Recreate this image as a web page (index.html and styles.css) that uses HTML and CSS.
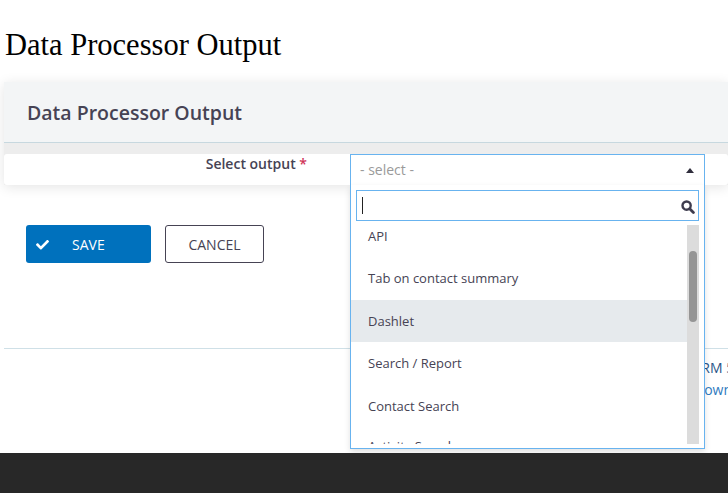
FILE: index.html
```html
<!DOCTYPE html>
<html lang="en">
<head>
<meta charset="utf-8">
<title>Data Processor Output</title>
<link rel="stylesheet" href="styles.css">
</head>
<body>
<div class="page">
  <h1 class="page-title">Data Processor Output</h1>

  <section class="panel">
    <div class="panel-header">
      <h2 class="panel-title">Data Processor Output</h2>
    </div>
    <div class="panel-body">
      <div class="form-row">
        <label class="form-label">Select output <span class="req">*</span></label>
        <div class="select">
          <div class="select-current">
            <span class="placeholder">- select -</span>
            <span class="caret"></span>
          </div>
          <div class="select-drop">
            <div class="search-wrap">
              <div class="search-input">
                <span class="text-cursor"></span>
                <svg class="search-icon" viewBox="0 0 14 14" width="14" height="14" aria-hidden="true">
                  <circle cx="5.6" cy="5.6" r="4.1" fill="none" stroke="#3e3c4e" stroke-width="2.4"/>
                  <path d="M8.7 8.7 L12.4 12.4" stroke="#3e3c4e" stroke-width="2.8" stroke-linecap="round"/>
                </svg>
              </div>
            </div>
            <div class="results">
              <ul class="result-list">
                <li class="result">API</li>
                <li class="result">Tab on contact summary</li>
                <li class="result highlighted">Dashlet</li>
                <li class="result">Search / Report</li>
                <li class="result">Contact Search</li>
                <li class="result">Activity Search</li>
              </ul>
              <div class="scroll-track"><div class="scroll-thumb"></div></div>
            </div>
          </div>
        </div>
      </div>
    </div>
  </section>

  <div class="buttons">
    <button class="btn btn-primary" type="button">
      <svg class="btn-icon" viewBox="0 0 512 430" width="13" height="11" aria-hidden="true">
        <path fill="#fff" d="M173.9 407.4l-166.4-166.4c-10-10-10-26.2 0-36.2l36.2-36.2c10-10 26.2-10 36.2 0L192 280.7 432.1 40.6c10-10 26.2-10 36.2 0l36.2 36.2c10 10 10 26.2 0 36.2l-294.4 294.4c-10 10-26.2 10-36.2 0z"/>
      </svg>
      <span>SAVE</span>
    </button>
    <button class="btn btn-secondary" type="button">CANCEL</button>
  </div>

  <div class="footer-rule"></div>
  <div class="footer-text">
    <p class="footer-line line-one">Powered by <a href="#">CiviCRM 5.69.1</a>.</p>
    <p class="footer-line line-two"><a href="#">Download CiviCRM</a>.</p>
  </div>
</div>
<footer class="site-footer"></footer>
</body>
</html>
```

FILE: styles.css
```css
html, body {
  margin: 0;
  padding: 0;
  background: #fff;
  overflow: hidden;
}

body {
  font-family: "Open Sans", "Noto Sans", sans-serif;
  color: #464354;
}

.page {
  position: relative;
  height: 453px;
  padding-left: 4px;
  box-sizing: border-box;
  overflow: hidden;
}

.page-title {
  margin: 28px 0 20px 1px;
  font-family: "Liberation Serif", "Times New Roman", serif;
  font-size: 30.5px;
  font-weight: normal;
  line-height: 34px;
  color: #000;
}

/* Panel */
.panel {
  background: #ededed;
  box-shadow: 0 2px 12px rgba(0, 0, 0, 0.11);
}

.panel-header {
  height: 60px;
  background: #f3f5f6;
  border-bottom: 1px solid #c7d8df;
  display: flex;
  align-items: center;
  padding-left: 23px;
}

.panel-title {
  margin: 0;
  font-size: 19.5px;
  font-weight: 600;
  color: #464354;
}

.panel-body {
  padding-top: 11px;
}

.form-row {
  display: grid;
  grid-template-columns: 346px 355px;
  height: 31px;
  background: #fff;
  border-radius: 3px;
}

.form-label {
  text-align: right;
  padding-right: 43px;
  font-size: 14px;
  font-weight: 600;
  line-height: 19px;
  color: #464354;
}

.req {
  color: #cf3458;
}

/* Select */
.select {
  position: relative;
  border: 1px solid #68b3ef;
  border-bottom: none;
  background: #fff;
}

.select-current {
  height: 30px;
  display: flex;
  align-items: center;
  justify-content: space-between;
  padding: 0 10px 0 9px;
}

.placeholder {
  font-size: 14px;
  line-height: 19px;
  color: #9a9a9a;
  padding-bottom: 2px;
}

.caret {
  width: 0;
  height: 0;
  border-left: 4.5px solid transparent;
  border-right: 4.5px solid transparent;
  border-bottom: 5px solid #2f2d3c;
}

.select-drop {
  position: absolute;
  top: 100%;
  left: -1px;
  right: -1px;
  border: 1px solid #68b3ef;
  border-top: none;
  background: #fff;
  padding-bottom: 4px;
  box-shadow: 0 3px 6px rgba(0, 0, 0, 0.12);
  z-index: 5;
}

.search-wrap {
  padding: 5px 5px 4px;
}

.search-input {
  height: 29px;
  border: 1px solid #68b3ef;
  display: flex;
  align-items: center;
  justify-content: space-between;
  padding: 0 3px 0 5px;
}

.text-cursor {
  width: 1px;
  height: 17px;
  background: #222;
}

.search-icon {
  display: block;
  margin-top: 2px;
}

.results {
  display: flex;
  height: 219px;
  margin-right: 5px;
}

.result-list {
  flex: 1;
  list-style: none;
  margin: 0;
  padding: 0;
  overflow: hidden;
}

.result {
  height: 42.5px;
  line-height: 42.5px;
  padding-left: 17px;
  font-size: 13px;
  color: #464354;
}

.result:first-child {
  margin-top: -10.5px;
}

.result:last-child {
  line-height: 38px;
}

.result.highlighted {
  background: #e6eaed;
}

.scroll-track {
  width: 12px;
  background: #dcdcdc;
  padding-top: 26px;
  box-sizing: border-box;
}

.scroll-thumb {
  width: 8px;
  height: 71px;
  margin-left: 2px;
  border-radius: 4px;
  background: #959595;
}

/* Buttons */
.buttons {
  display: flex;
  gap: 14px;
  margin-top: 40px;
  padding-left: 22px;
}

.btn {
  height: 38px;
  border-radius: 3px;
  font-family: "Open Sans", "Noto Sans", sans-serif;
  font-size: 14px;
  cursor: pointer;
  box-sizing: border-box;
}

.btn-primary {
  width: 125px;
  background: #0071bd;
  border: none;
  color: #fff;
  display: flex;
  align-items: center;
  padding: 0 0 0 10px;
  gap: 23px;
}

.btn-icon {
  display: block;
}

.btn-secondary {
  width: 99px;
  background: #fff;
  border: 1px solid #464354;
  color: #464354;
  padding: 0;
}

/* Footer */
.footer-rule {
  margin-top: 85px;
  height: 1px;
  background: #cfe0e7;
}

.footer-text {
  padding-top: 8px;
  font-size: 14px;
  line-height: 22px;
  white-space: nowrap;
}

.footer-line {
  margin: 0;
}

.footer-line a {
  text-decoration: none;
}

.line-one {
  margin-left: 585px;
  color: #464354;
}

.line-one a {
  color: #2a5587;
}

.line-two {
  margin-left: 690px;
  color: #464354;
}

.line-two a {
  color: #2f7bc0;
}

.site-footer {
  height: 40px;
  background: #282828;
}
```
